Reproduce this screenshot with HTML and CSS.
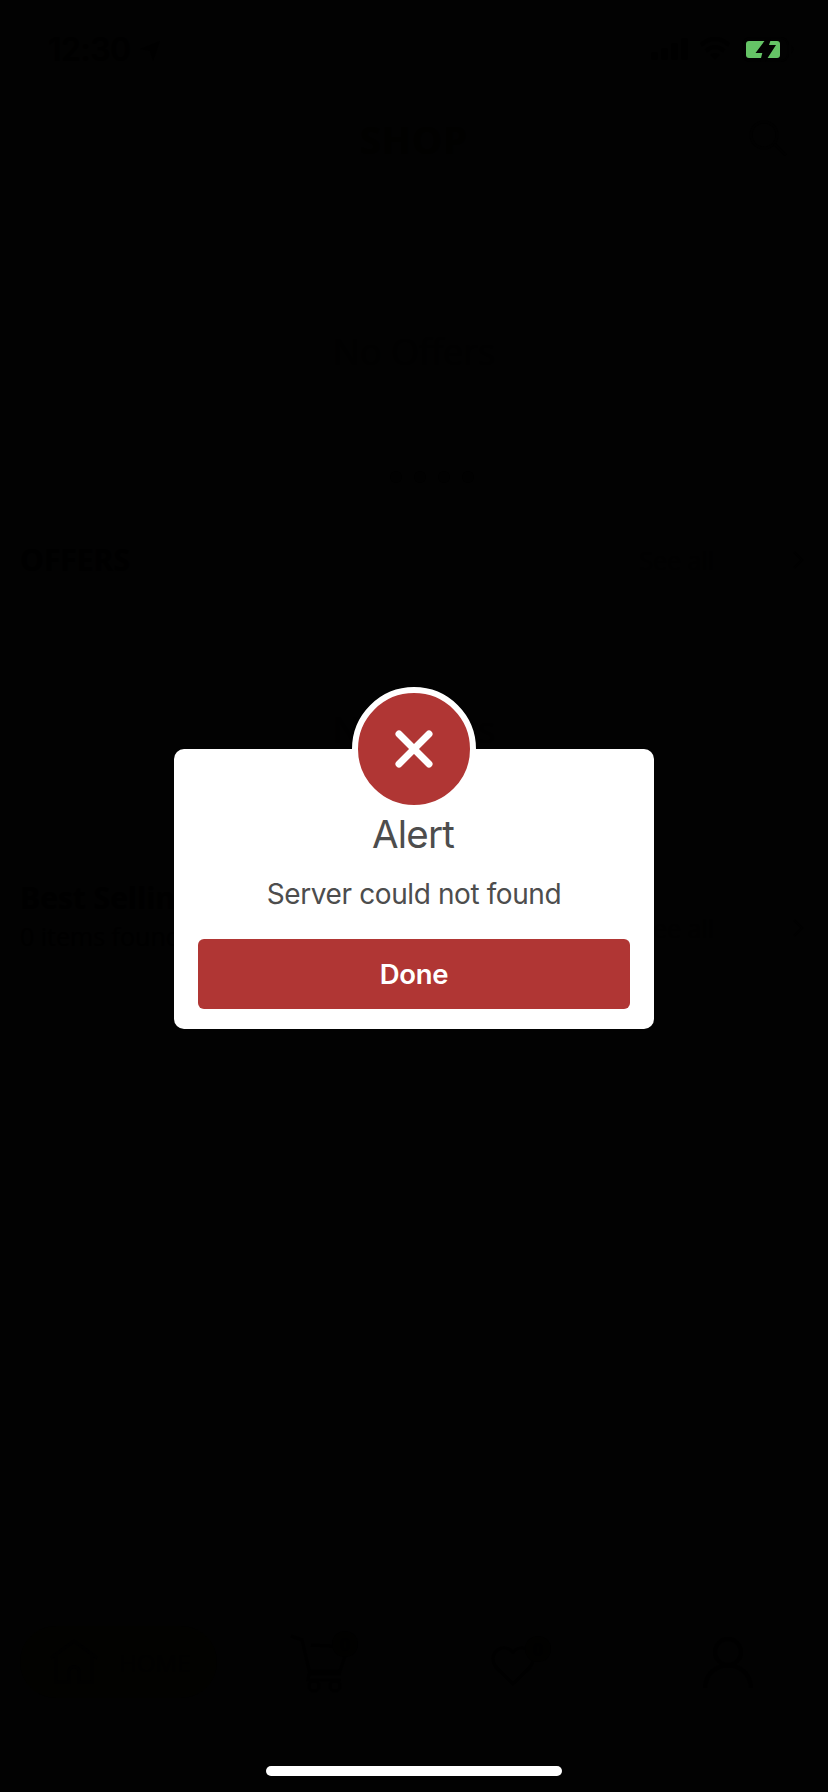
FILE: index.html
```html
<!DOCTYPE html>
<html lang="en">
<head>
<meta charset="utf-8">
<meta name="viewport" content="width=device-width">
<title>Shop</title>
<link rel="stylesheet" href="styles.css">
</head>
<body>
<main class="shop">
  <div class="status">
    <div class="clock"><span>12:30</span>
      <svg width="22" height="22" viewBox="0 0 22 22"><path d="M1 9 21 1 14 21 11 11Z" fill="currentColor"/></svg>
    </div>
    <div class="signals">
      <svg width="38" height="24" viewBox="0 0 38 24" fill="currentColor"><rect y="15" width="7" height="8" rx="2"/><rect x="10" y="11" width="7" height="12" rx="2"/><rect x="20" y="6" width="7" height="17" rx="2"/><rect x="30" y="1" width="7" height="22" rx="2"/></svg>
      <svg width="30" height="24" viewBox="0 0 30 24" fill="none" stroke="currentColor" stroke-width="4"><path d="M1 8Q15-4 29 8M6 14q9-8 18 0"/><path d="m10 18 5 5 5-5q-5-4-10 0Z" fill="currentColor" stroke="none"/></svg>
      <svg class="battery" width="53" height="25" viewBox="0 0 53 25"><rect x="1" y="1" width="45" height="23" rx="7" fill="none" stroke="#010101" stroke-width="2"/><path d="M49 8q5 4 0 9Z" fill="#010101"/><rect x="4" y="4" width="34" height="17" rx="3" fill="#65c466"/><path d="M24 2 13.500 16H20.300L18 25h5L34 8h-7l2-6Z" fill="#010101"/></svg>
    </div>
  </div>
  <header class="topbar"><h1>SHOP</h1>
    <svg width="40" height="36" viewBox="0 0 40 36" fill="none" stroke="currentColor" stroke-width="3"><circle cx="16" cy="15" r="13"/><path d="m26 24 12 11"/></svg>
  </header>
  <section class="banner"><p>No Offers</p>
    <div class="dots"><i></i><i></i><i></i><i></i></div>
  </section>
  <section class="offers">
    <div class="row"><h2>OFFERS</h2><span class="more">See all</span>
      <svg width="12" height="20" viewBox="0 0 12 20" fill="none" stroke="currentColor" stroke-width="2"><path d="m2 2 8 8-8 8"/></svg>
    </div>
    <p>No Offers</p>
  </section>
  <section class="best">
    <div class="headline"><h2>Best Selling</h2><p>0 items found</p></div>
    <span class="more">See all</span>
    <svg width="12" height="20" viewBox="0 0 12 20" fill="none" stroke="currentColor" stroke-width="2"><path d="m2 2 8 8-8 8"/></svg>
  </section>
  <nav class="tabs">
    <div class="tab home">
      <svg width="50" height="46" viewBox="0 0 50 46" fill="none" stroke="currentColor" stroke-width="3"><path d="m2 19 23-17 23 17M7 17v26h13V31q5-7 10 0v12h13V17"/></svg><span>HOME</span>
    </div>
    <div class="tab cart">
      <svg width="60" height="60" viewBox="0 0 60 60" fill="none" stroke="currentColor" stroke-width="3"><path d="m1 3 11 4 8 34h31M21 12l37 2-8 24H20M19 41l-1 6h33"/><circle cx="24" cy="53" r="5"/><circle cx="45" cy="53" r="5"/></svg><b class="badge">0</b>
    </div>
    <div class="tab heart">
      <svg width="46" height="42" viewBox="0 0 46 42" fill="none" stroke="currentColor" stroke-width="3"><path d="M22 38 5 21C-5 8 12-5 22 6 32-5 49 8 39 21Z"/></svg><b class="badge">0</b>
    </div>
    <div class="tab person">
      <svg width="52" height="52" viewBox="0 0 52 52" fill="none" stroke="currentColor" stroke-width="4"><circle cx="26" cy="15" r="13"/><path d="M3 51c1-30 45-30 46 0"/></svg>
    </div>
  </nav>
  <div class="indicator"></div>
</main>
<div class="overlay">
  <div class="dialog" role="alertdialog">
    <div class="mark"><svg width="38" height="38" viewBox="0 0 38 38"><path d="m4 4 30 30M34 4 4 34" stroke="#fff" stroke-width="7" stroke-linecap="round"/></svg></div>
    <h3>Alert</h3>
    <p>Server could not found</p>
    <button>Done</button>
  </div>
</div>
</body>
</html>
```
FILE: styles.css
```css
* { box-sizing: border-box; margin: 0; padding: 0; }
body { background: #020202; color: #000; font-family: Inter, sans-serif; overflow: hidden; }
.shop { height: 1792px; display: flex; flex-direction: column; font-family: "Open Sans", sans-serif; }
.shop svg { display: block; }
.status { height: 100px; padding: 37px 33px 0 48px; display: flex; justify-content: space-between; align-items: flex-start; }
.clock { display: flex; gap: 8px; font: 600 32px/26px Inter, sans-serif; letter-spacing: -.5px; }
.clock svg { margin-top: 3px; }
.signals { display: flex; gap: 11px; }
.signals .battery { margin-left: 1px; }
.topbar { height: 80px; display: grid; grid-template-columns: 1fr auto 1fr; padding: 18px 40px 0; color: #010100; }
.topbar h1 { grid-column: 2; font-size: 38px; line-height: 42px; letter-spacing: 1px; }
.topbar svg { justify-self: end; margin-top: 2px; color: #010101; }
.banner { height: 340px; padding-top: 150px; text-align: center; font-size: 36px; line-height: 44px; color: #010101; }
.dots { display: flex; justify-content: center; gap: 12px; margin-top: 97px; padding-left: 36px; }
.dots i { width: 12px; height: 12px; border-radius: 50%; background: #010101; }
.offers { height: 345px; padding: 20px 20px 0; }
.row { display: flex; align-items: center; height: 40px; }
.row h2, .headline { flex: 1; }
.row h2, .headline h2 { font-size: 30px; line-height: 40px; }
.more { font-size: 25px; margin-right: 78px; color: #010101; }
.row svg, .best svg { margin-right: 4px; color: #010101; }
.offers > p { margin-top: 128px; text-align: center; font-size: 36px; line-height: 44px; color: #010101; }
.best { display: flex; align-items: flex-start; padding: 13px 20px; flex: 1; }
.headline p { font-size: 25px; line-height: 36px; }
.best .more { margin-top: 32px; line-height: 36px; }
.best svg { margin-top: 40px; }
.tabs { height: 110px; display: grid; grid-template-columns: 237px 176px 208px 1fr; align-items: start; padding-top: 8px; }
.tab { position: relative; width: max-content; }
.home { display: flex; align-items: center; justify-self: center; gap: 20px; width: 197px; height: 72px; padding-left: 29px; border-radius: 36px; background: #020200; color: #010100; font-size: 24px; }
.cart { margin: 7px 0 0 53px; }
.heart { margin: 20px 0 0 78px; }
.person { margin: 11px 0 0 81px; }
.badge { position: absolute; width: 26px; height: 26px; border-radius: 50%; background: #010100; text-align: center; font-size: 18px; line-height: 26px; }
.cart .badge { right: -8px; top: -2px; }
.heart .badge { right: -14px; top: -10px; }
.indicator { width: 296px; height: 10px; border-radius: 5px; background: #fff; margin: 38px auto 16px; }
.overlay { position: absolute; inset: 0; display: flex; flex-direction: column; align-items: center; padding-top: 749px; }
.dialog { width: 480px; height: 280px; border-radius: 10px; background: #fff; color: #4d4d4d; padding: 0 24px; display: flex; flex-direction: column; align-items: center; }
.mark { width: 124px; height: 124px; margin-top: -62px; flex: none; border: 6px solid #fff; border-radius: 50%; background: #b03634; display: grid; place-items: center; }
.dialog h3 { font-size: 38.5px; line-height: 48px; font-weight: 400; margin: -1px 2px 0 0; letter-spacing: -.8px; }
.dialog p { font-size: 28px; line-height: 36px; margin-top: 18px; letter-spacing: -.4px; }
.dialog button { width: 432px; height: 70px; margin-top: 27px; border: 0; border-radius: 6px; background: #b03634; color: #fff; font: 600 27.5px/70px Inter, sans-serif; letter-spacing: -.3px; }
```
